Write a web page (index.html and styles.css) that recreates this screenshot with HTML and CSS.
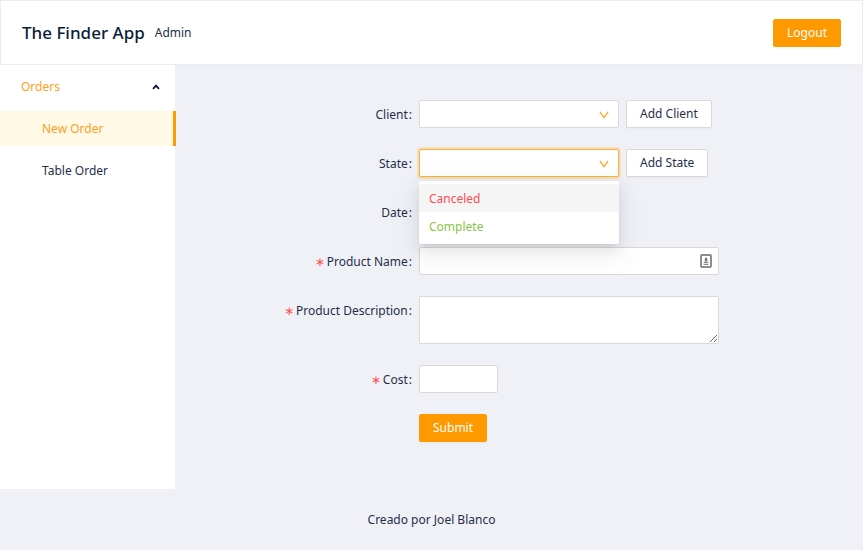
FILE: index.html
```html
<!DOCTYPE html>
<html lang="en">
<head>
<meta charset="utf-8">
<title>The Finder App</title>
<link rel="stylesheet" href="styles.css">
</head>
<body>
<header class="header">
  <h1 class="title">The Finder App</h1>
  <span class="subtitle">Admin</span>
  <button type="button" class="btn btn-primary logout">Logout</button>
</header>
<div class="body">
  <nav class="sider">
    <button type="button" class="menu-title" aria-expanded="true">
      <span>Orders</span>
      <svg width="8" height="6" viewBox="0 0 8 6" aria-hidden="true"><path d="M1 4.8 4 1.6 7 4.8" fill="none" stroke="#0c1c38" stroke-width="1.9"/></svg>
    </button>
    <a href="#new" class="menu-item selected">New Order</a>
    <a href="#table" class="menu-item">Table Order</a>
  </nav>
  <main class="content">
    <form class="form">
      <div class="row">
        <label class="label" for="client">Client</label>
        <div class="control">
          <div class="select">
            <select id="client"><option></option></select>
            <svg class="arrow" width="10" height="8" viewBox="0 0 10 8" aria-hidden="true"><path d="M1 1 5 6.6 9 1" fill="none" stroke="#ffab2b" stroke-width="1.3"/></svg>
          </div>
          <button type="button" class="btn">Add Client</button>
        </div>
      </div>
      <div class="row">
        <label class="label" for="state">State</label>
        <div class="control">
          <div class="select open">
            <select id="state"><option></option></select>
            <svg class="arrow" width="10" height="8" viewBox="0 0 10 8" aria-hidden="true"><path d="M1 1 5 6.6 9 1" fill="none" stroke="#ffab2b" stroke-width="1.3"/></svg>
            <ul class="dropdown" role="listbox" aria-label="State">
              <li class="option canceled active" role="option">Canceled</li>
              <li class="option complete" role="option">Complete</li>
            </ul>
          </div>
          <button type="button" class="btn">Add State</button>
        </div>
      </div>
      <div class="row">
        <label class="label" for="date">Date</label>
        <div class="control"><input id="date" class="input date" type="date"></div>
      </div>
      <div class="row">
        <label class="label required" for="name">Product Name</label>
        <div class="control field">
          <input id="name" class="input" type="text">
          <svg class="autofill" width="12" height="14" viewBox="0 0 12 14" aria-hidden="true"><rect x="1" y="1" width="10" height="12" rx="1" fill="#fff" stroke="#8b8b91" stroke-width="2"/><path d="M6 3 7.4 5 7 7.4H5L4.6 5Z" fill="#77777d"/><path d="M3.6 8.4h4.8M3.6 10.4h4.8" stroke="#8b8b91" stroke-width="1.1"/></svg>
        </div>
      </div>
      <div class="row">
        <label class="label required" for="description">Product Description</label>
        <div class="control"><textarea id="description" class="input area"></textarea></div>
      </div>
      <div class="row">
        <label class="label required" for="cost">Cost</label>
        <div class="control"><input id="cost" class="input cost" type="text"></div>
      </div>
      <div class="row">
        <div class="control action"><button type="submit" class="btn btn-primary">Submit</button></div>
      </div>
    </form>
  </main>
</div>
<footer class="footer">Creado por Joel Blanco</footer>
</body>
</html>
```
FILE: styles.css
```css
* {
  box-sizing: border-box;
}

body {
  margin: 0;
  min-height: 100vh;
  display: flex;
  flex-direction: column;
  background: #f0f1f6;
  color: #1f2e4a;
  font: 12px/20px "Noto Sans", "Open Sans", sans-serif;
}

button,
input,
select,
textarea {
  font: inherit;
  color: inherit;
}

.header {
  display: flex;
  align-items: center;
  height: 65px;
  padding: 0 21px;
  background: #fff;
  border: 1px solid #ebedf0;
}

.title {
  margin: 0 10px 0 0;
  color: #0c1c38;
  font-size: 17px;
  font-weight: 500;
  line-height: 28px;
}

.logout {
  margin-left: auto;
}

.btn {
  height: 28px;
  padding: 0 13px;
  background: #fff;
  border: 1px solid #d9d9d9;
  border-radius: 2px;
  line-height: 20px;
  box-shadow: 0 2px 0 rgba(0, 0, 0, 0.02);
}

.btn-primary {
  background: #ff9900;
  border-color: #ff9900;
  color: #fff;
}

.body {
  flex: 1;
  display: flex;
}

.sider {
  width: 176px;
  padding-top: 4px;
  background: #fff;
  border-right: 1px solid #f0f1f6;
}

.menu-title {
  display: flex;
  align-items: center;
  justify-content: space-between;
  width: 100%;
  height: 35px;
  margin-bottom: 7px;
  padding: 0 15px 0 21px;
  background: none;
  border: 0;
  color: #ff9f1f;
}

.menu-item {
  display: block;
  height: 35px;
  margin-bottom: 7px;
  padding-left: 42px;
  color: #1f2e4a;
  line-height: 35px;
  text-decoration: none;
}

.menu-item.selected {
  margin-right: -1px;
  background: #fff9e6;
  border-right: 3px solid #ff9900;
  color: #ff9f1f;
}

.content {
  flex: 1;
  padding: 35px 42px 47px;
}

.form {
  display: flex;
  flex-direction: column;
  gap: 21px;
}

.row {
  display: grid;
  grid-template-columns: 1fr 2fr;
}

.label {
  display: flex;
  justify-content: flex-end;
  height: 28px;
  padding-right: 7px;
  line-height: 30px;
}

.label::after {
  content: ":";
  margin-left: 1px;
}

.label.required::before {
  content: "\2217";
  margin-right: 2px;
  color: #ff4d4f;
  font-family: "DejaVu Sans", sans-serif;
}

.control {
  display: flex;
  gap: 7px;
}

.action {
  grid-column: 2;
}

.select {
  position: relative;
  width: 200px;
  height: 28px;
}

.select select,
.input {
  background: #fff;
  border: 1px solid #d9d9d9;
  border-radius: 2px;
  outline: 0;
}

.select select {
  display: block;
  width: 100%;
  height: 100%;
  padding: 0 24px 0 10px;
  appearance: none;
}

.select.open select {
  border-color: #ffb12e;
  box-shadow: 0 0 0 2px rgba(255, 153, 0, 0.2);
}

.arrow {
  position: absolute;
  top: 11px;
  right: 10px;
  pointer-events: none;
}

.dropdown {
  position: absolute;
  z-index: 1;
  top: 32px;
  left: 0;
  width: 100%;
  margin: 0;
  padding: 3px 0 4px;
  list-style: none;
  background: #fff;
  border-radius: 2px;
  box-shadow: 0 3px 5px -3px rgba(0, 0, 0, 0.12), 0 5px 14px rgba(0, 0, 0, 0.08), 0 8px 24px 7px rgba(0, 0, 0, 0.05);
}

.option {
  padding: 5px 10px 3px;
}

.option.active {
  background: #f5f5f5;
}

.canceled {
  color: #ff4d4f;
}

.complete {
  color: #8bc34a;
}

.input {
  width: 300px;
  height: 28px;
  padding: 0 10px;
}

.date {
  width: 150px;
}

.field {
  position: relative;
  width: 300px;
}

.autofill {
  position: absolute;
  top: 7px;
  right: 7px;
}

.area {
  height: 48px;
  resize: vertical;
}

.cost {
  width: 79px;
}

.footer {
  padding: 21px;
  text-align: center;
}
```
